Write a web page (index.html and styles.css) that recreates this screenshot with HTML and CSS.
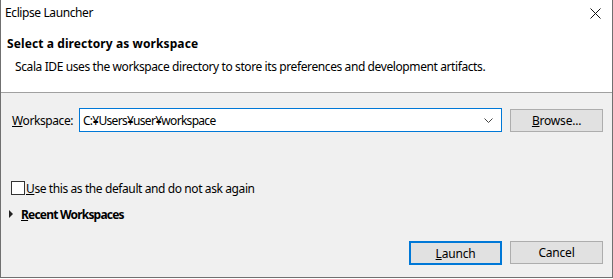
FILE: index.html
```html
<!DOCTYPE html>
<html lang="en">
<head>
    <meta charset="UTF-8">
    <title>Eclipse Launcher</title>
    <link rel="stylesheet" href="styles.css">
</head>
<body>
    <div class="window">
        <div class="top">
            <div class="titlebar">
                <span class="title">Eclipse Launcher</span>
                <svg class="close" width="11" height="11" viewBox="0 0 11 11">
                    <path d="M0.5 0.5L10.5 10.5M10.5 0.5L0.5 10.5" stroke="#111" stroke-width="1" fill="none"/>
                </svg>
            </div>
            <div class="heading">Select a directory as workspace</div>
            <div class="subtitle">Scala IDE uses the workspace directory to store its preferences and development artifacts.</div>
        </div>

        <div class="content">
            <div class="ws-row">
                <label class="ws-label"><u>W</u>orkspace:</label>
                <div class="combo">
                    <span class="combo-text">C:¥Users¥user¥workspace</span>
                    <svg class="chevron" width="9" height="5" viewBox="0 0 9 5">
                        <path d="M0.5 0.5L4.5 4.5L8.5 0.5" stroke="#444" stroke-width="1" fill="none"/>
                    </svg>
                </div>
                <button class="btn"><u>B</u>rowse...</button>
            </div>

            <div class="check-row">
                <span class="checkbox"></span>
                <span><u>U</u>se this as the default and do not ask again</span>
            </div>

            <div class="recent-row">
                <span class="tri"></span>
                <span class="recent"><u>R</u>ecent Workspaces</span>
            </div>

            <div class="actions">
                <button class="btn primary"><u>L</u>aunch</button>
                <button class="btn">Cancel</button>
            </div>
        </div>
    </div>
</body>
</html>
```

FILE: styles.css
```css
body {
    margin: 0;
    padding: 0;
    background-color: #fff;
    font-family: "Noto Sans", "Open Sans", sans-serif;
    font-size: 12px;
    letter-spacing: -0.4px;
    color: #000;
}

.window {
    width: 613px;
    height: 278px;
    box-sizing: border-box;
    border-left: 1px solid #707070;
    border-right: 1px solid #707070;
    border-bottom: 1px solid #707070;
    display: flex;
    flex-direction: column;
    background-color: #f0f0f0;
}

.top {
    background-color: #fff;
    height: 92px;
    border-bottom: 1px solid #a0a0a0;
}

.titlebar {
    height: 30px;
    display: flex;
    justify-content: space-between;
    align-items: center;
    padding: 0 11px 0 4px;
}

.title {
    line-height: 16px;
    margin-top: -4px;
}

.close {
    margin-top: -4px;
}

.heading {
    font-weight: bold;
    letter-spacing: 0.1px;
    line-height: 16px;
    margin-top: 6px;
    padding-left: 6px;
}

.subtitle {
    line-height: 16px;
    margin-top: 7px;
    padding-left: 14px;
}

.content {
    flex: 1;
    padding: 0 9px 0 0;
    display: flex;
    flex-direction: column;
}

.ws-row {
    display: flex;
    align-items: center;
    margin-top: 15px;
    padding-left: 11px;
}

.ws-label {
    width: 67px;
}

.combo {
    width: 424px;
    height: 24px;
    box-sizing: border-box;
    border: 1px solid #0078d7;
    background-color: #fff;
    display: flex;
    align-items: center;
    justify-content: space-between;
    padding: 0 8px 0 3px;
}

.combo-text {
    letter-spacing: -0.7px;
}

.btn {
    font-family: inherit;
    font-size: 12px;
    letter-spacing: -0.2px;
    color: #000;
    width: 93px;
    height: 23px;
    box-sizing: border-box;
    background-color: #e1e1e1;
    border: 1px solid #adadad;
    padding: 0;
    margin-left: 8px;
}

.btn.primary {
    border: 2px solid #0078d7;
    height: 24px;
}

.check-row {
    display: flex;
    align-items: center;
    margin-top: 49px;
    padding-left: 10px;
    height: 14px;
}

.checkbox {
    width: 14px;
    height: 14px;
    box-sizing: border-box;
    border: 1px solid #333;
    background-color: #fff;
    margin-right: 1px;
}

.recent-row {
    display: flex;
    align-items: center;
    margin-top: 12px;
    height: 14px;
    padding-left: 8px;
}

.tri {
    width: 0;
    height: 0;
    border-top: 4px solid transparent;
    border-bottom: 4px solid transparent;
    border-left: 4px solid #222;
    margin-right: 8px;
}

.recent {
    font-weight: bold;
    letter-spacing: -0.8px;
}

.actions {
    display: flex;
    justify-content: flex-end;
    margin-top: 20px;
}
```
